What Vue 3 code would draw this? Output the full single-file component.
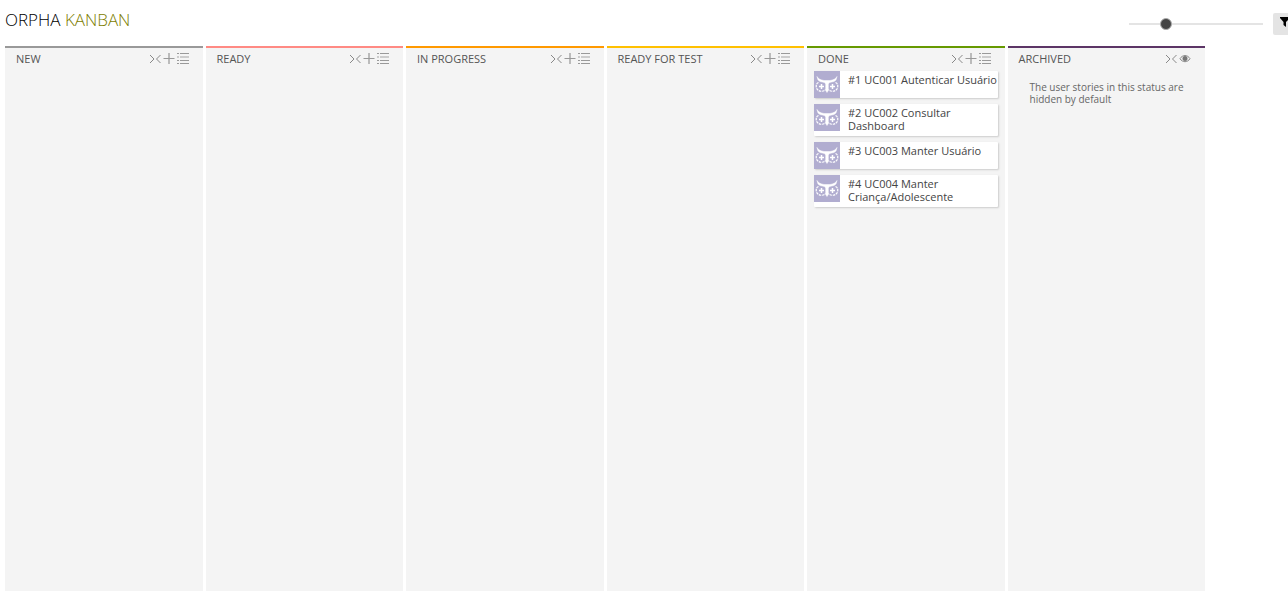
<script setup>
import { ref } from 'vue'

const zoom = ref(25)

const columns = [
  { name: 'NEW', tone: 'gray', stories: [] },
  { name: 'READY', tone: 'coral', stories: [] },
  { name: 'IN PROGRESS', tone: 'orange', stories: [] },
  { name: 'READY FOR TEST', tone: 'yellow', stories: [] },
  {
    name: 'DONE',
    tone: 'green',
    stories: [
      { id: 1, title: 'UC001 Autenticar Usuário' },
      { id: 2, title: 'UC002 Consultar Dashboard' },
      { id: 3, title: 'UC003 Manter Usuário' },
      { id: 4, title: 'UC004 Manter Criança/Adolescente' },
    ],
  },
  { name: 'ARCHIVED', tone: 'purple', archived: true, stories: [] },
]
</script>

<template>
  <main class="page">
    <header class="top">
      <h1 class="title">ORPHA <span>KANBAN</span></h1>
      <div class="tools">
        <input v-model="zoom" class="slider" type="range" min="0" max="100" aria-label="Card zoom" />
        <button class="filter" type="button" aria-label="Filters">
          <svg width="10" height="10" viewBox="0 0 10 10"><path d="M0 0H10V1L6 5V10L3.500 8V5L0 1Z" fill="#000" /></svg>
        </button>
      </div>
    </header>

    <div class="board">
      <section v-for="col in columns" :key="col.name" class="column" :class="col.tone">
        <div class="head">
          <h2>{{ col.name }}</h2>
          <div class="actions">
            <button type="button" aria-label="Fold column">
              <svg width="12" height="12" viewBox="0 0 12 12"><path d="M1 2L5 6L1 10M11.500 2L7.500 6L11.500 10" fill="none" stroke="#888" /></svg>
            </button>
            <template v-if="!col.archived">
              <button type="button" aria-label="Add user story">
                <svg width="12" height="12" viewBox="0 0 12 12"><path d="M6 0V11" stroke="#bbb" stroke-width="2" /><path d="M0.500 5.500H11.500" stroke="#999" /></svg>
              </button>
              <button type="button" aria-label="Add user stories in bulk">
                <svg width="12" height="12" viewBox="0 0 12 12"><path d="M0 0.500H2M3 0.500H12M0 7.500H2M3 7.500H12M0 10.500H2M3 10.500H12" stroke="#999" /><path d="M0 4H2M3 4H12" stroke="#ccc" stroke-width="2" /></svg>
              </button>
            </template>
            <button v-else type="button" aria-label="Show archived">
              <svg width="12" height="12" viewBox="0 0 12 12"><path d="M1 5.700C3.500 1.500 8.500 1.500 11 5.700C8.500 9.700 3.500 9.700 1 5.700Z" fill="none" stroke="#888" /><circle cx="6" cy="5.500" r="2.500" fill="#777" /></svg>
            </button>
          </div>
        </div>

        <p v-if="col.archived" class="note">The user stories in this status are hidden by default</p>

        <ul v-else class="cards">
          <li v-for="story in col.stories" :key="story.id" class="card">
            <svg class="avatar" width="26" height="27" viewBox="0 0 26 27">
              <rect width="26" height="27" fill="#b1add0" />
              <path d="M3 5.500C4 8 7 9 10 9.500H16C19 9 22 8 23 5.500L22 9L20 10.500L15.500 11.500L14.300 13V19.500L13 21.500L11.700 19.500V13L10.500 11.500L6 10.500L4 9Z" fill="#fff" stroke="#fff" stroke-width="0.500" />
              <g fill="none" stroke="#fff">
                <path d="M4.500 11.500C2.300 12.500 1.800 14.500 2.500 17C3.800 20.500 9 21.500 11.500 18.500M21.500 11.500C23.700 12.500 24.200 14.500 23.500 17C22.200 20.500 17 21.500 14.500 18.500" stroke-width="1.200" stroke-dasharray="2.500 0.800" />
                <path d="M5 15.500H10M7.500 13V18M16 15.500H21M18.500 13V18" stroke-width="1.500" />
              </g>
            </svg>
            <p>#{{ story.id }} {{ story.title }}</p>
          </li>
        </ul>
      </section>
    </div>
  </main>
</template>

<style>
body {
  background: #fff;
}
</style>

<style scoped>
.page {
  box-sizing: border-box;
  min-height: 100vh;
  display: flex;
  flex-direction: column;
  padding: 0 0 7px 5px;
  font-family: "Open Sans", "Noto Sans", sans-serif;
  overflow: hidden;
}
h1,
h2,
p,
ul {
  margin: 0;
  padding: 0;
  font-weight: 400;
}
button {
  border: 0;
  padding: 0;
  background: none;
  cursor: pointer;
}
svg {
  display: block;
}
.top {
  display: flex;
  justify-content: space-between;
  height: 46px;
}
.title {
  padding-top: 8px;
  font-size: 17px;
  line-height: 24px;
  font-weight: 300;
  color: #000;
}
.title span {
  color: #7d7d00;
}
.tools {
  display: flex;
  align-items: center;
  gap: 10px;
  padding-top: 2px;
  margin-right: -6px;
}
.slider {
  appearance: none;
  width: 134px;
  height: 12px;
  margin: 0;
  background: none;
}
.slider::-webkit-slider-runnable-track {
  height: 2px;
  background: #e4e4e4;
}
.slider::-webkit-slider-thumb {
  appearance: none;
  width: 12px;
  height: 12px;
  margin-top: -5px;
  border: 1px solid #aaa;
  border-radius: 50%;
  background: #444;
}
.filter {
  display: flex;
  justify-content: flex-start;
  align-items: flex-start;
  box-sizing: border-box;
  width: 21px;
  height: 22px;
  padding: 4px 0 0 7px;
  border-radius: 2px;
  background: #e4e4e4;
}
.board {
  flex: 1;
  display: grid;
  grid-template-columns: repeat(6, minmax(0, 1fr));
  gap: 3px;
  margin-right: 83px;
}
.column {
  border-top: 2px solid #999;
  background: #f4f4f4;
}
.coral { border-color: #ff8a84; }
.orange { border-color: #ff9900; }
.yellow { border-color: #ffc000; }
.green { border-color: #669900; }
.purple { border-color: #5c3566; }
.head {
  display: flex;
  justify-content: space-between;
  align-items: center;
  box-sizing: border-box;
  height: 23px;
  padding: 0 14px 2px 11px;
}
.head h2 {
  font-size: 11px;
  line-height: 16px;
  color: #555;
}
.actions {
  display: flex;
  gap: 2px;
}
.cards {
  display: grid;
  gap: 6px;
  padding: 0 7px;
  list-style: none;
}
.card {
  display: flex;
  align-items: flex-start;
  background: #fff;
  border-radius: 1px;
  box-shadow: 1px 1px 2px #ccc;
}
.avatar {
  flex: none;
}
.card p {
  padding: 2px 0 4px 8px;
  font-size: 11px;
  line-height: 13px;
  color: #444;
}
.note {
  padding: 10px 12px 0 22px;
  font-size: 10px;
  line-height: 12px;
  font-weight: 500;
  color: #666;
}
</style>
